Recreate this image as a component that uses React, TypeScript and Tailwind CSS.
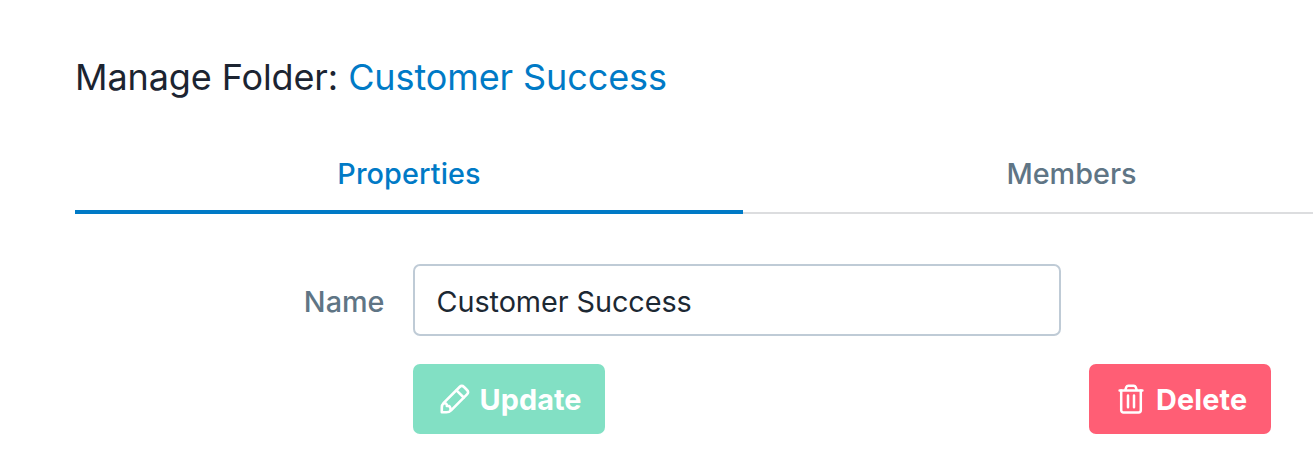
const PencilIcon = () => (
  <svg
    viewBox="0 0 30 30"
    className="h-[30px] w-[30px] shrink-0"
    fill="none"
    stroke="currentColor"
    strokeWidth="2.6"
    strokeLinecap="round"
    strokeLinejoin="round"
  >
    <path d="M1.8 28.2V23.5Q1.8 20.8 3.7 18.9L19.6 3Q21.8.8 24 3L27 6Q29.2 8.2 27 10.4L11.1 26.3Q9.2 28.2 6.5 28.2Z" />
    <path d="m16.5 6.3 7.2 7.2M3.9 19.4c2-.4 3.2.4 3 2.6 2.5-.4 4 .8 3.6 4.2" />
  </svg>
);

const TrashIcon = () => (
  <svg
    viewBox="0 0 28 30"
    className="h-[30px] w-7 shrink-0"
    fill="none"
    stroke="currentColor"
    strokeWidth="2.5"
    strokeLinecap="round"
    strokeLinejoin="round"
  >
    <path d="M2.6 6.5h22.8M8.2 6.2 9.3 3.1Q9.9 1.8 11.2 1.8h5.6q1.3 0 1.9 1.3l1.1 3.1" />
    <path d="M4.2 6.5V26.2a2.2 2.2 0 0 0 2.2 2.2h15.2a2.2 2.2 0 0 0 2.2-2.2V6.5M11 11.5V23.3M17 11.5V23.3" />
  </svg>
);

const App = () => {
  return (
    <div className="h-[476px] w-full overflow-hidden bg-white pl-[75px] pt-[53px] font-['Inter',sans-serif]">
      <h1 className="h-12 whitespace-nowrap text-[36px] leading-[48px] tracking-[-0.1px] text-[#1c2431]">
        Manage Folder: <span className="text-[#007ac6]">Customer Success</span>
      </h1>

      {/* Tabs, the second one runs past the right edge */}
      <div className="mt-[33px] flex h-20 w-[1325px] text-[28.8px] font-medium leading-[80px]">
        <div className="w-[668px] border-b-4 border-[#007ac6] text-center tracking-[0.1px] text-[#007ac6]">
          Properties
        </div>
        <div className="w-[657px] border-b-2 border-[#dcdddf] text-center text-[#5f7585]">
          Members
        </div>
      </div>

      <div className="mt-[50px] flex items-center">
        <label
          htmlFor="name"
          className="w-[309.5px] pt-[3px] text-right text-[28.8px] font-medium text-[#5f7585]"
        >
          Name
        </label>
        <input
          id="name"
          defaultValue="Customer Success"
          className="ml-[28.5px] h-[72px] w-[648px] rounded-[7px] border-2 border-[#bfcbd6] px-[21.5px] pt-[3px] text-[28.8px] tracking-[-0.06px] text-[#1c2833] outline-none"
        />
      </div>

      <div className="mt-7 ml-[338px] flex w-[858px] justify-between text-[28.8px] font-bold text-white">
        <button className="flex h-[70px] w-48 items-center rounded-[7px] bg-[#82e0c4] pb-px pl-[27px]">
          <PencilIcon />
          <span className="ml-[9.5px] pt-[3px] tracking-[0.1px]">Update</span>
        </button>
        <button className="flex h-[70px] w-[182px] items-center rounded-[7px] bg-[#ff5e75] pb-px pl-7">
          <TrashIcon />
          <span className="ml-[11px] pt-[3px] tracking-[0.15px]">Delete</span>
        </button>
      </div>
    </div>
  );
};

export default App;
